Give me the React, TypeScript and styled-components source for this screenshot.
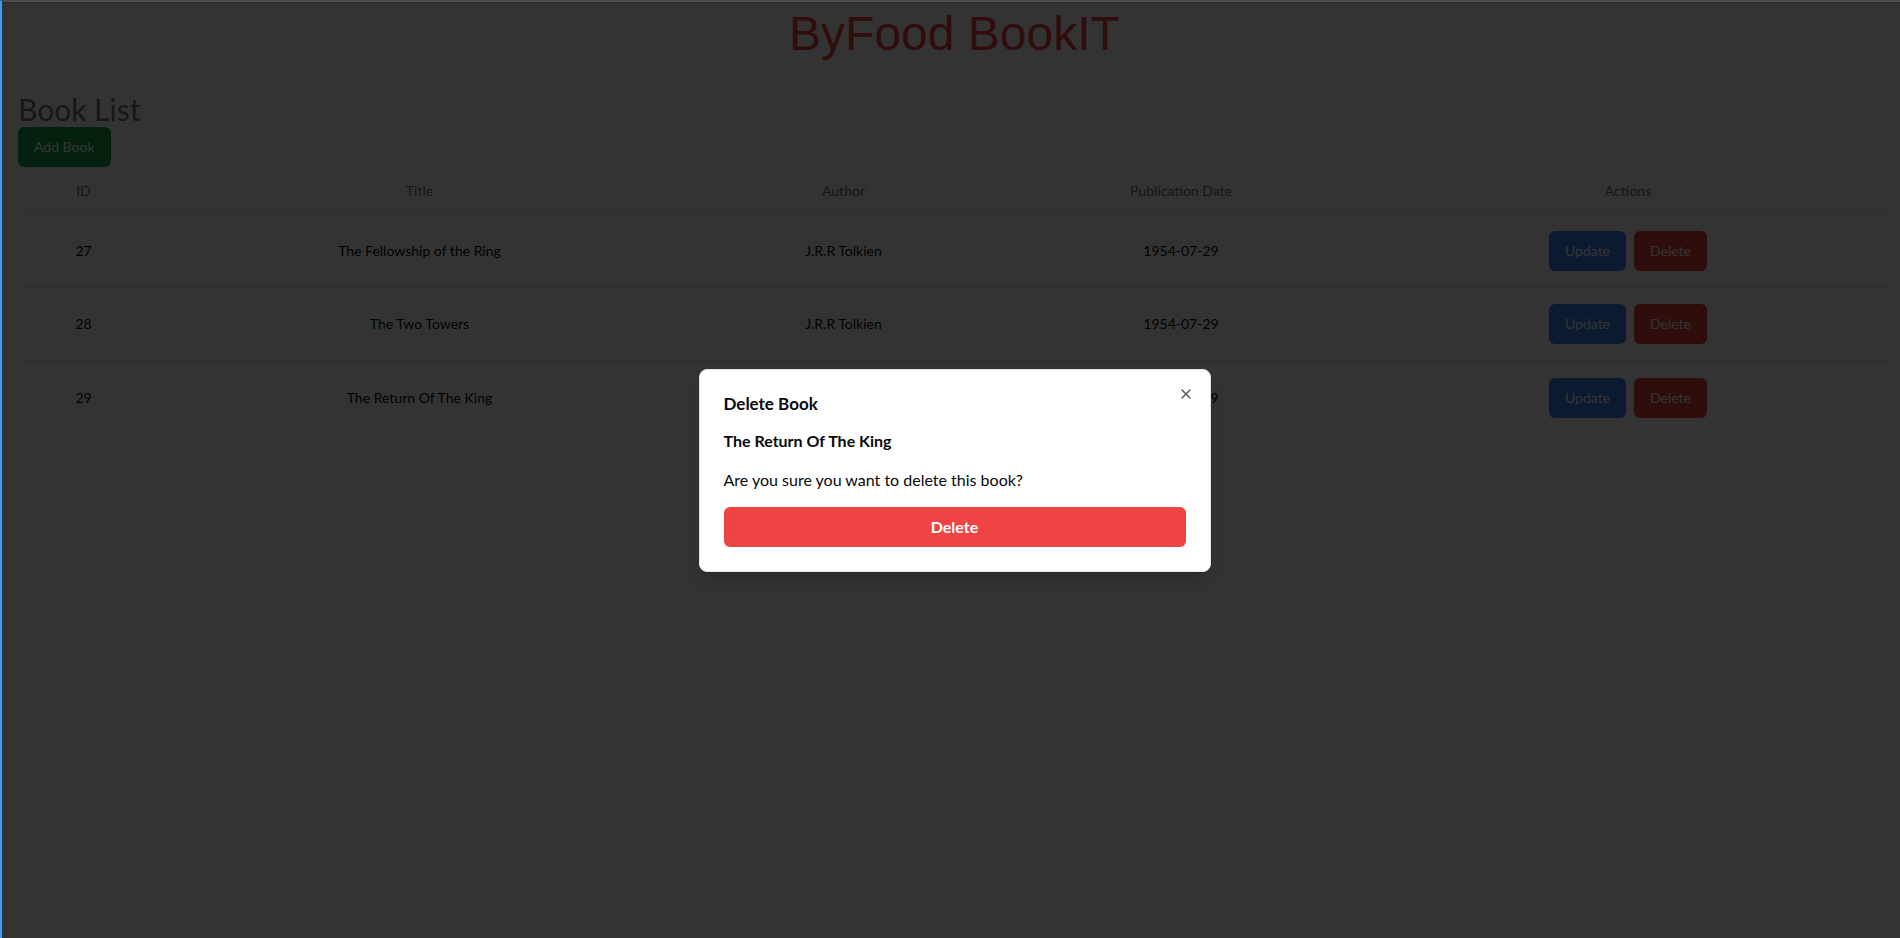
import React from "react";
import styled, { createGlobalStyle } from "styled-components";
import { X } from "lucide-react";

const GlobalStyle = createGlobalStyle`
  html, body {
    margin: 0;
    padding: 0;
    background: #ffffff;
    overflow: hidden;
  }
  body {
    font-family: Lato, "Noto Sans", "DejaVu Sans", sans-serif;
    color: #09090b;
  }
  * { box-sizing: border-box; }
`;

const Frame = styled.div`
  position: relative;
  width: 1907px;
  height: 938px;
  border-left: 2px solid #3d9bff;
  border-top: 2px solid #4d4d4d;
  background: #ffffff;
  overflow: hidden;
`;

const Page = styled.main`
  height: 100%;
  border-top: 1px solid #d4d4d4;
  padding: 7px 16px 0;
`;

const AppTitle = styled.h1`
  margin: 0;
  text-align: center;
  font-family: "Liberation Sans", Arial, sans-serif;
  font-weight: 400;
  font-size: 48px;
  line-height: 48px;
  color: #ef4444;
`;

const SectionTitle = styled.h2`
  margin: 33px 0 0;
  font-size: 30px;
  line-height: 36px;
  font-weight: 400;
  color: #6b7280;
`;

const Button = styled.button<{ $tone: "green" | "blue" | "red" }>`
  height: 40px;
  padding: 0 16px;
  border: none;
  border-radius: 6px;
  font-family: inherit;
  font-size: 14px;
  line-height: 24px;
  color: #ffffff;
  cursor: pointer;
  background: ${(p) =>
    p.$tone === "green" ? "#16a34a" : p.$tone === "blue" ? "#3b82f6" : "#ef4444"};
`;

const Table = styled.table`
  width: 100%;
  table-layout: fixed;
  border-collapse: separate;
  border-spacing: 0;
`;

const Col = styled.col<{ $w: number }>`
  width: ${(p) => p.$w}px;
`;

const HeadCell = styled.th`
  padding: 12px 8px;
  line-height: 23px;
  font-size: 14px;
  font-weight: 400;
  color: #71717a;
  text-align: center;
  border-bottom: 1px solid #e5e7eb;
`;

const Cell = styled.td<{ $last?: boolean }>`
  padding: 16px 8px;
  height: 73px;
  line-height: 40px;
  font-size: 14px;
  color: #09090b;
  text-align: center;
  vertical-align: middle;
  border-bottom: ${(p) => (p.$last ? "none" : "1px solid #e5e7eb")};
`;

const ActionGroup = styled.div`
  display: flex;
  justify-content: center;
  align-items: center;
  gap: 8px;
  height: 40px;
`;

const Overlay = styled.div`
  position: absolute;
  inset: 0;
  background: rgba(0, 0, 0, 0.8);
  display: flex;
  align-items: center;
  justify-content: center;
`;

const Dialog = styled.div`
  position: relative;
  width: 512px;
  background: #ffffff;
  border: 1px solid #e4e4e7;
  border-radius: 8px;
  padding: 24px;
  display: flex;
  flex-direction: column;
  gap: 15px;
  box-shadow: 0 10px 15px -3px rgba(0, 0, 0, 0.1), 0 4px 6px -4px rgba(0, 0, 0, 0.1);
`;

const CloseButton = styled.button`
  position: absolute;
  top: 16px;
  right: 16px;
  width: 16px;
  height: 16px;
  padding: 0;
  border: none;
  background: none;
  color: #09090b;
  opacity: 0.7;
  display: flex;
  align-items: center;
  justify-content: center;
  cursor: pointer;
`;

const DialogTitle = styled.h2`
  margin: 0;
  font-size: 17px;
  line-height: 20px;
  font-weight: 700;
  color: #09090b;
`;

const BookName = styled.h3`
  margin: 0;
  font-size: 16px;
  line-height: 24px;
  font-weight: 700;
  color: #09090b;
`;

const DialogText = styled.p`
  margin: 0;
  font-size: 16px;
  line-height: 24px;
  color: #09090b;
`;

const ConfirmButton = styled.button`
  width: 100%;
  height: 40px;
  border: none;
  border-radius: 6px;
  background: #ef4444;
  color: #ffffff;
  font-family: inherit;
  font-size: 16px;
  font-weight: 700;
  cursor: pointer;
`;

const books = [
  { id: 27, title: "The Fellowship of the Ring", author: "J.R.R Tolkien", date: "1954-07-29" },
  { id: 28, title: "The Two Towers", author: "J.R.R Tolkien", date: "1954-07-29" },
  { id: 29, title: "The Return Of The King", author: "J.R.R Tolkien", date: "1954-07-29" },
];

export default function App() {
  return (
    <>
      <GlobalStyle />
      <Frame>
        <Page>
          <AppTitle>ByFood BookIT</AppTitle>
          <SectionTitle>Book List</SectionTitle>
          <Button $tone="green">Add Book</Button>
          <Table>
            <colgroup>
              <Col $w={131} />
              <Col $w={541} />
              <Col $w={307} />
              <Col $w={368} />
              <Col $w={526} />
            </colgroup>
            <thead>
              <tr>
                <HeadCell>ID</HeadCell>
                <HeadCell>Title</HeadCell>
                <HeadCell>Author</HeadCell>
                <HeadCell>Publication Date</HeadCell>
                <HeadCell>Actions</HeadCell>
              </tr>
            </thead>
            <tbody>
              {books.map((b, i) => {
                const last = i === books.length - 1;
                return (
                  <tr key={b.id}>
                    <Cell $last={last}>{b.id}</Cell>
                    <Cell $last={last}>{b.title}</Cell>
                    <Cell $last={last}>{b.author}</Cell>
                    <Cell $last={last}>{b.date}</Cell>
                    <Cell $last={last}>
                      <ActionGroup>
                        <Button $tone="blue">Update</Button>
                        <Button $tone="red">Delete</Button>
                      </ActionGroup>
                    </Cell>
                  </tr>
                );
              })}
            </tbody>
          </Table>
        </Page>
        <Overlay>
          <Dialog role="dialog" aria-labelledby="delete-title">
            <CloseButton aria-label="Close">
              <X size={16} strokeWidth={2} />
            </CloseButton>
            <DialogTitle id="delete-title">Delete Book</DialogTitle>
            <BookName>The Return Of The King</BookName>
            <DialogText>Are you sure you want to delete this book?</DialogText>
            <ConfirmButton>Delete</ConfirmButton>
          </Dialog>
        </Overlay>
      </Frame>
    </>
  );
}
